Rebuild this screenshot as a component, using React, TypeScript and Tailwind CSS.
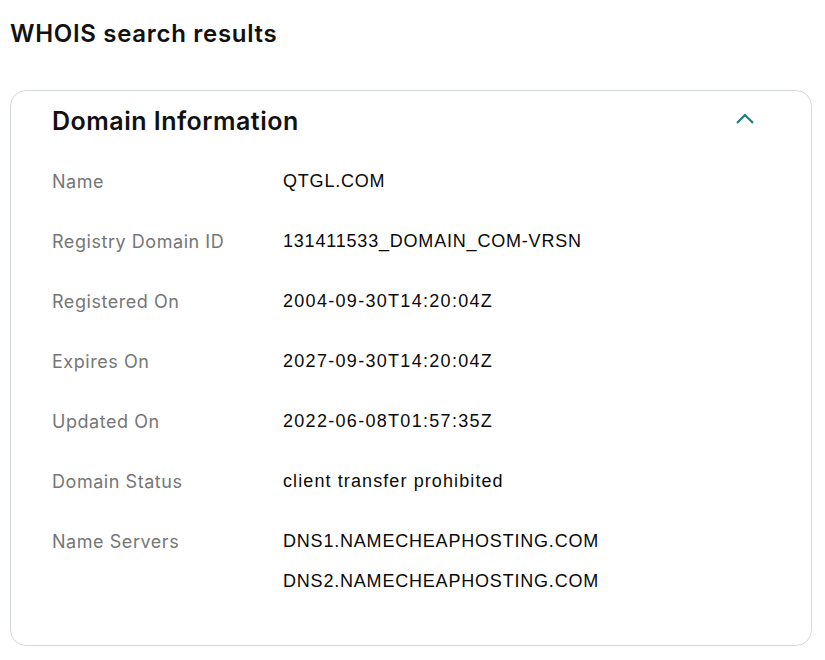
import React from "react";

const rows: { label: string; values: string[]; track: string }[] = [
  { label: "Name", values: ["QTGL.COM"], track: "tracking-[0.8px]" },
  { label: "Registry Domain ID", values: ["131411533_DOMAIN_COM-VRSN"], track: "tracking-[0.8px]" },
  { label: "Registered On", values: ["2004-09-30T14:20:04Z"], track: "tracking-[1.3px]" },
  { label: "Expires On", values: ["2027-09-30T14:20:04Z"], track: "tracking-[1.3px]" },
  { label: "Updated On", values: ["2022-06-08T01:57:35Z"], track: "tracking-[1.3px]" },
  { label: "Domain Status", values: ["client transfer prohibited"], track: "tracking-[1.1px]" },
  { label: "Name Servers", values: ["DNS1.NAMECHEAPHOSTING.COM", "DNS2.NAMECHEAPHOSTING.COM"], track: "tracking-[0.8px]" },
];

export default function App() {
  return (
    <div className="w-[825px] h-[660px] bg-white overflow-hidden font-['Inter',sans-serif]">
      <div className="pl-[10px] pr-[13px]">
        <h1 className="h-[68px] flex items-center text-[24px] font-semibold text-[#111] tracking-[0.7px]">
          WHOIS search results
        </h1>
        <div className="mt-[22px] border border-[#d4d9de] rounded-[16px] h-[556px] pl-[41px] pr-[56px]">
          <div className="h-[60px] flex items-center justify-between">
            <h2 className="text-[25px] font-semibold text-[#111] pt-[1px] tracking-[0.5px]">Domain Information</h2>
            <svg width="20" height="12" viewBox="0 0 20 12" className="mt-[-4px]">
              <path d="M2 10 L10 2 L18 10" fill="none" stroke="#1b7e7e" strokeWidth="2.2" />
            </svg>
          </div>
          <div>
            {rows.map((r) => (
              <div key={r.label} className="flex">
                <div className="w-[231px] h-[60px] flex items-center text-[18px] text-[#767676] tracking-[0.55px]">
                  {r.label}
                </div>
                <div
                  className={`flex flex-col gap-[20px] py-[20px] text-[18px] leading-[20px] text-[#0a0a0a] font-['Liberation_Sans',sans-serif] ${r.track}`}
                >
                  {r.values.map((v) => (
                    <div key={v}>{v}</div>
                  ))}
                </div>
              </div>
            ))}
          </div>
        </div>
      </div>
    </div>
  );
}
